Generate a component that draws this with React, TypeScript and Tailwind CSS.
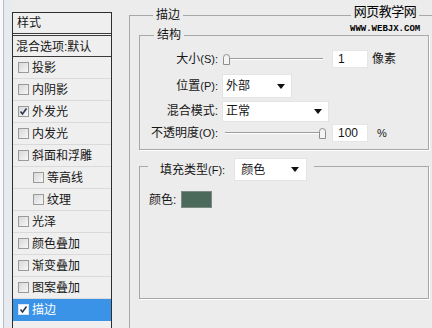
import React from "react";

type Row = { label: string; checked?: boolean; indent?: boolean; selected?: boolean };

const rows: Row[] = [
  { label: "投影" },
  { label: "内阴影" },
  { label: "外发光", checked: true },
  { label: "内发光" },
  { label: "斜面和浮雕" },
  { label: "等高线", indent: true },
  { label: "纹理", indent: true },
  { label: "光泽" },
  { label: "颜色叠加" },
  { label: "渐变叠加" },
  { label: "图案叠加" },
  { label: "描边", checked: true, selected: true },
];

function CheckBox({ checked, light }: { checked?: boolean; light?: boolean }) {
  return (
    <span
      className={`flex h-[11px] w-[11px] shrink-0 items-center justify-center border ${
        light ? "border-[#d6e6f8] bg-white" : "border-[#9a9a9a] bg-gradient-to-br from-[#d8d8d8] to-[#f7f7f7]"
      }`}
    >
      {checked && (
        <svg width="9" height="9" viewBox="0 0 9 9">
          <polyline points="1.5,4.5 3.5,7 7.5,1.5" fill="none" stroke="#2a3550" strokeWidth="1.6" />
        </svg>
      )}
    </span>
  );
}

function StyleList() {
  return (
    <div className="mt-[12px] flex w-[100px] shrink-0 flex-col border-x border-t border-[#2e2e2e] bg-[#efefef]">
      <div className="flex h-[20px] items-center pl-[4px] leading-none">样式</div>
      <div className="h-[3px] border-y border-[#3a3a3a] bg-[#f6f6f6]" />
      <div className="flex h-[21px] items-center border-b border-[#3a3a3a] pl-[3px] pt-[2px] leading-none">
        混合选项:默认
      </div>
      {rows.map((r) => (
        <div
          key={r.label}
          className={`flex h-[22px] items-center gap-[3px] border-b leading-none ${
            r.selected ? "border-[#3b93e8] bg-[#3b93e8] text-white" : "border-[#dadada]"
          } ${r.indent ? "pl-[20px]" : "pl-[5px]"}`}
        >
          <CheckBox checked={r.checked} light={r.selected} />
          <span>{r.label}</span>
        </div>
      ))}
    </div>
  );
}

function Arrow() {
  return (
    <svg width="8" height="5" viewBox="0 0 8 5" className="shrink-0">
      <polygon points="0,0 8,0 4,5" fill="#111" />
    </svg>
  );
}

function Dropdown({ value, className }: { value: string; className: string }) {
  return (
    <div className={`flex items-center justify-between border border-[#e4e4e4] bg-white pl-[3px] pr-[6px] leading-none ${className}`}>
      <span>{value}</span>
      <Arrow />
    </div>
  );
}

function Thumb() {
  return (
    <svg width="7" height="11" viewBox="0 0 7 11" className="shrink-0">
      <path d="M0.5,10.5 V3.5 Q0.5,0.5 3.5,0.5 Q6.5,0.5 6.5,3.5 V10.5 Z" fill="#f4f4f4" stroke="#8e8e8e" />
    </svg>
  );
}

function Track({ className }: { className: string }) {
  return <div className={`h-[2px] border-t border-[#9c9c9c] bg-white ${className}`} />;
}

function NumberBox({ value }: { value: string }) {
  return (
    <div className="flex h-[18px] w-[36px] items-center border border-[#e6e6e6] bg-white pl-[5px] leading-none">
      {value}
    </div>
  );
}

function Label({ cn, en }: { cn: string; en: string }) {
  return (
    <div className="w-[78px] shrink-0 text-right leading-none">
      {cn}
      <span className="text-[11px]">{en}</span>
    </div>
  );
}

function StrokePanel() {
  return (
    <fieldset className="mt-[8px] w-[310px] shrink-0 border-l border-t border-[#a8a8a8] pl-[9px]">
      <legend className="ml-[14px] px-[3px] leading-[14px]">描边</legend>

      {/* 结构 */}
      <fieldset className="mt-[6px] w-[290px] border border-[#a8a8a8] px-0 pb-[6px] pt-[6px] shadow-[1px_1px_0_#ffffff]">
        <legend className="ml-[14px] px-[3px] leading-[14px]">结构</legend>

        <div className="flex h-[22px] items-center">
          <Label cn="大小" en="(S):" />
          <div className="ml-[5px] flex w-[100px] items-center">
            <Thumb />
            <Track className="flex-1" />
          </div>
          <div className="ml-[9px]">
            <NumberBox value="1" />
          </div>
          <span className="ml-[4px] leading-none">像素</span>
        </div>

        <div className="mt-[4px] flex h-[24px] items-center">
          <Label cn="位置" en="(P):" />
          <Dropdown value="外部" className="ml-[4px] h-[24px] w-[70px]" />
        </div>

        <div className="mt-[2px] flex h-[22px] items-center">
          <div className="w-[78px] shrink-0 text-right leading-none">混合模式:</div>
          <Dropdown value="正常" className="ml-[4px] h-[21px] w-[107px]" />
        </div>

        <div className="mt-[1px] flex h-[20px] items-center">
          <Label cn="不透明度" en="(O):" />
          <div className="ml-[7px] flex w-[101px] items-center">
            <Track className="flex-1" />
            <Thumb />
          </div>
          <div className="ml-[6px]">
            <NumberBox value="100" />
          </div>
          <span className="ml-[9px] text-[11px] leading-none">%</span>
        </div>
      </fieldset>

      {/* 填充类型 */}
      <fieldset className="mt-[2px] h-[147px] w-[290px] border border-[#a8a8a8] shadow-[1px_1px_0_#ffffff]">
        <legend className="ml-[8px] flex items-center pl-[12px] pr-[7px] pt-[6px]">
          <span className="leading-none">
            填充类型<span className="text-[11px]">(F):</span>
          </span>
          <Dropdown value="颜色" className="ml-[9px] h-[23px] w-[73px] pl-[6px] pr-[7px]" />
        </legend>
        <div className="flex items-center pl-[9px] pt-[10px]">
          <span className="leading-none">颜色:</span>
          <div className="ml-[5px] h-[17px] w-[31px] border border-[#7d8a84] bg-[#4b6a5c]" />
        </div>
      </fieldset>
    </fieldset>
  );
}

function Watermark() {
  return (
    <div className="absolute left-[350px] top-[3px] flex flex-col items-center text-black">
      <span className="bg-[#ececec] px-[3px] text-[13px] leading-[17px] tracking-[-0.5px]">网页教学网</span>
      <span className="mt-[5px] font-[family-name:'Liberation_Mono',monospace] text-[9px] font-bold leading-none">
        WWW.WEBJX.COM
      </span>
    </div>
  );
}

export default function App() {
  return (
    <div className="relative flex h-[328px] w-[432px] overflow-hidden bg-[#ececec] font-[family-name:'Liberation_Sans','Noto_Sans_CJK_SC',sans-serif] text-[12px] text-[#161616]">
      {/* window edge */}
      <div className="flex w-[12px] shrink-0">
        <div className="w-[3px] bg-[#f8f9fb]" />
        <div className="w-px bg-[#b9bdc4]" />
        <div className="flex-1 bg-[#e7eaef]" />
      </div>
      <StyleList />
      <div className="w-[17px] shrink-0" />
      <StrokePanel />
      <Watermark />
    </div>
  );
}
